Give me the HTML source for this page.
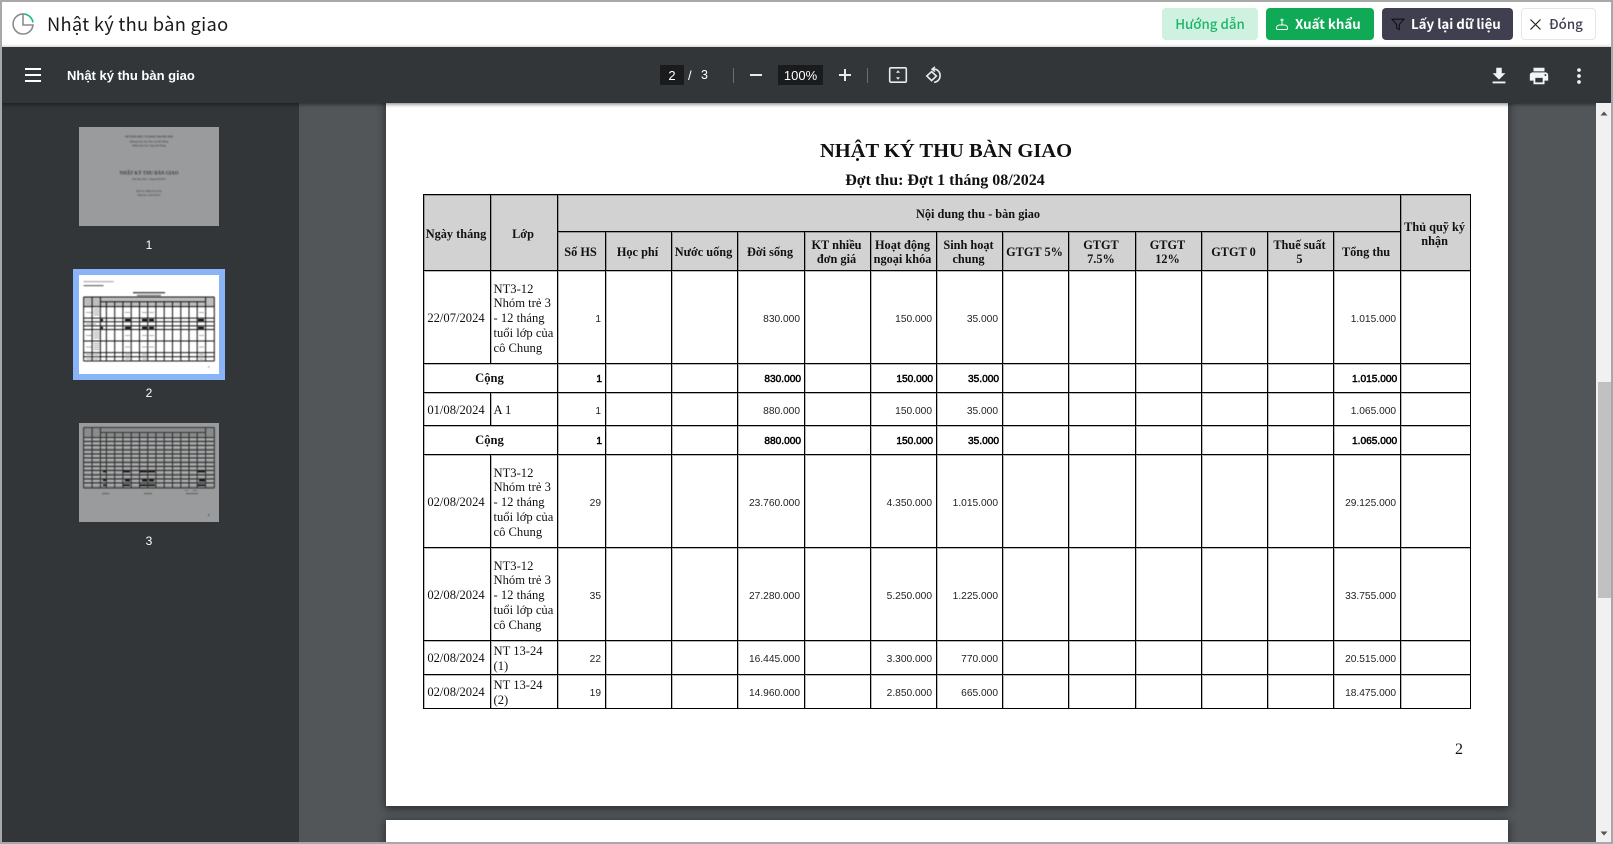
<!DOCTYPE html>
<html lang="vi">
<head>
<meta charset="utf-8">
<title>Nhật ký thu bàn giao</title>
<style>
html,body{margin:0;padding:0;width:1613px;height:844px;overflow:hidden;background:#a8a8a8}
*{box-sizing:border-box}
.a{position:absolute}
#app{position:absolute;left:2px;top:2px;width:1609px;height:840px;overflow:hidden;background:#525659}
#root{position:absolute;left:-2px;top:-2px;width:1613px;height:844px}
.hd{left:0;top:0;width:1613px;height:47px;background:#fff}
.ttl{left:47px;top:10px;font:400 18.3px/29px "Noto Sans CJK SC","DejaVu Sans",sans-serif;color:#1a1a1a;letter-spacing:.3px;white-space:nowrap}
.btn{top:8px;height:32px;border-radius:4px;font:500 13.3px/32px "Noto Sans CJK SC","DejaVu Sans",sans-serif;white-space:nowrap}
.tb{left:0;top:47px;width:1613px;height:56px;background:#323639;box-shadow:0 1px 4px rgba(0,0,0,.55);z-index:5}
.tt{font-family:"Liberation Sans",sans-serif;color:#fff;white-space:nowrap}
.sb{left:0;top:103px;width:299px;height:741px;background:#323639}
.view{left:299px;top:103px;width:1297px;height:741px;background:#525659}
.pg{background:#fff;box-shadow:0 2px 8px 1px rgba(0,0,0,.45)}
table{position:absolute;left:423px;top:194px;border-collapse:collapse;table-layout:fixed;width:1047px;font:400 12.6px/14.8px "Liberation Serif",serif;color:#111}
td,th{border:1px solid #000;padding:0;overflow:hidden;box-shadow:inset 1px 1px 0 rgba(0,0,0,.28)}
th{background:#d2d2d2;font:700 12.3px/14px "Liberation Serif",serif;color:#111;text-align:center;padding-right:2px;padding-top:2px}
td{text-align:right;vertical-align:middle}
td.n{font:400 10.2px/14px "Liberation Sans",sans-serif;padding-right:4px;padding-top:5px;color:#222}
td.b{font:400 10.15px/14px "Liberation Sans",sans-serif;padding-right:3px;padding-top:3px;color:#000;-webkit-text-stroke:.5px #000}
td.d{text-align:center;padding-right:2px;padding-top:2px}
td.l{text-align:left;padding-left:2.5px;padding-top:3px}
td.c{text-align:center;font:700 12.6px/14px "Liberation Serif",serif;padding-right:2px}
.lbl{font:400 12px/14px "Liberation Sans",sans-serif;color:#fff;width:20px;text-align:center}
</style>
</head>
<body>
<div id="app"><div id="root">

<div class="a hd">
  <svg class="a" style="left:11px;top:12px" width="24" height="24" viewBox="0 0 24 24" fill="none">
    <path d="M14.5 2.3A10 10 0 1 0 22 13H12V2.2" stroke="#8c8c8c" stroke-width="1.6"/>
    <path d="M14 2.2A10 10 0 0 1 22 10.4" stroke="#18c06c" stroke-width="1.6"/>
  </svg>
  <div class="a ttl">Nhật ký thu bàn giao</div>
  <div class="a btn" style="left:1162px;width:96px;background:#cff1df;color:#1cb56a;text-align:center">Hướng dẫn</div>
  <div class="a btn" style="left:1266px;width:108px;background:#10a955;color:#fff;padding-left:29px;font-weight:700">Xuất khẩu</div>
  <svg class="a" style="left:1275px;top:17px" width="14" height="15" viewBox="0 0 14 15" fill="none" stroke="#fff" stroke-width="1"><path d="M7 1.5v6M5.2 3h3.6M4.7 8h4.6M1.5 11c0-2 1.5-3 3.2-3h4.6c1.7 0 3.2 1 3.2 3v.5c0 .8-.5 1-1 1H2.5c-.6 0-1-.3-1-1z"/></svg>
  <div class="a btn" style="left:1382px;width:131px;background:#3f3f50;color:#fff;padding-left:29px;font-weight:700">Lấy lại dữ liệu</div>
  <svg class="a" style="left:1391px;top:18px" width="14" height="13" viewBox="0 0 14 13" fill="none" stroke="#111" stroke-width="1.1"><path d="M1 1.2h12L8.4 6.4v5.2L5.6 10V6.4z"/></svg>
  <div class="a btn" style="left:1521px;width:75px;background:#fff;border:1px solid #e6e6e6;color:#3f3f50;padding-left:27px;line-height:30px">Đóng</div>
  <svg class="a" style="left:1529px;top:18px" width="13" height="13" viewBox="0 0 13 13" fill="none" stroke="#222" stroke-width="1.2"><path d="M1.5 1.5l10 10M11.5 1.5l-10 10"/></svg>
</div>

<div class="a tb">
  <div class="a" style="left:25px;top:21px;width:16px;height:2px;background:#fff"></div>
  <div class="a" style="left:25px;top:27px;width:16px;height:2px;background:#fff"></div>
  <div class="a" style="left:25px;top:33px;width:16px;height:2px;background:#fff"></div>
  <div class="a tt" style="left:67px;top:21px;font-size:13px;line-height:16px;font-weight:700">Nhật ký thu bàn giao</div>

  <div class="a" style="left:660px;top:18px;width:24px;height:20px;background:#191b1c"></div>
  <div class="a tt" style="left:660px;top:21px;width:24px;text-align:center;font-size:13px;line-height:16px">2</div>
  <div class="a tt" style="left:688px;top:21px;font-size:13px;line-height:16px">/</div>
  <div class="a tt" style="left:701px;top:20px;font-size:12.5px;line-height:16px">3</div>
  <div class="a" style="left:733px;top:21px;width:1px;height:15px;background:#6b6e70"></div>
  <div class="a" style="left:750px;top:27px;width:12px;height:2px;background:#e8eaed"></div>
  <div class="a" style="left:778px;top:18px;width:45px;height:20px;background:#191b1c"></div>
  <div class="a tt" style="left:778px;top:21px;width:45px;text-align:center;font-size:13px;line-height:16px">100%</div>
  <div class="a" style="left:839px;top:27px;width:12px;height:2px;background:#e8eaed"></div>
  <div class="a" style="left:844px;top:22px;width:2px;height:12px;background:#e8eaed"></div>
  <div class="a" style="left:867px;top:21px;width:1px;height:15px;background:#6b6e70"></div>
  <svg class="a" style="left:888px;top:19px" width="20" height="18" viewBox="0 0 20 18" fill="none"><rect x="1.7" y="1.8" width="16.6" height="14.4" rx="1.2" stroke="#e8eaed" stroke-width="1.6"/><path d="M10 4.2l2 2.6H8zM10 13.8l2-2.6H8z" fill="#e8eaed"/></svg>
  <svg class="a" style="left:923px;top:19px" width="20" height="20" viewBox="0 0 20 20" fill="none" stroke="#e8eaed" stroke-width="1.6"><path d="M8.6 5.6L3.8 10l4.8 4.6 4.8-4.6z"/><path d="M9.5 3.2c4-.6 7.6 2 7.6 6.4 0 3.6-2.6 6.4-6 6.7"/><path d="M12 .8L9 3.2l3 2.4" stroke-width="1.4" fill="none"/></svg>

  <svg class="a" style="left:1488px;top:18px" width="22" height="22" viewBox="0 0 24 24" fill="#f1f3f4"><path d="M19 9h-4V3H9v6H5l7 7 7-7zM5 18v2h14v-2H5z"/></svg>
  <svg class="a" style="left:1528px;top:18px" width="22" height="22" viewBox="0 0 24 24" fill="#f1f3f4"><path d="M19 8H5c-1.66 0-3 1.34-3 3v6h4v4h12v-4h4v-6c0-1.66-1.34-3-3-3zm-3 11H8v-5h8v5zm3-7c-.55 0-1-.45-1-1s.45-1 1-1 1 .45 1 1-.45 1-1 1zm-1-9H6v4h12V3z"/></svg>
  <svg class="a" style="left:1568px;top:18px" width="22" height="22" viewBox="0 0 24 24" fill="#f1f3f4"><circle cx="12" cy="5.5" r="2"/><circle cx="12" cy="12" r="2"/><circle cx="12" cy="18.5" r="2"/></svg>
</div>

<div class="a sb"></div>
<div class="a view"></div>

<!-- Thumbnail 1 -->
<svg class="a" style="left:79px;top:127px" width="140" height="99" viewBox="0 0 140 99">
  <rect width="140" height="99" fill="#9a9b9c"/>
  <g font-family="Liberation Serif,serif" fill="#3a3b3c" text-anchor="middle" style="filter:blur(.4px)">
    <text x="70" y="10.5" font-size="2.8" font-weight="700">SỞ GIÁO DỤC VÀ ĐÀO TẠO HÀ NỘI</text>
    <text x="70" y="15.5" font-size="2.8">Phòng Giáo dục Đào tạo Hà Đông</text>
    <text x="70" y="19.5" font-size="2.8">Mầm Non Sao Sáng Hà Đông</text>
    <text x="70" y="47.5" font-size="4.8" font-weight="700">NHẬT KÝ THU BÀN GIAO</text>
    <text x="70" y="53" font-size="2.8">Đợt thu: Đợt 1 tháng 08/2024</text>
    <text x="70" y="65" font-size="2.8">Đơn vị: Mầm Non Sao</text>
    <text x="70" y="69" font-size="2.8">Năm học 2024-2025</text>
  </g>
</svg>

<!-- Thumbnail 2 -->
<div class="a" style="left:73px;top:269px;width:152px;height:111px;background:#8ab4f8"></div>
<svg class="a" style="left:79px;top:275px" width="140" height="99" viewBox="0 0 140 99">
  <rect width="140" height="99" fill="#fff"/>
  <g style="filter:blur(.5px)">
    <rect x="4.6" y="6" width="30" height="1.2" fill="#aaa"/>
    <rect x="4.6" y="10" width="20" height="1.2" fill="#666"/>
    <rect x="54" y="17" width="32" height="1.4" fill="#444"/>
    <rect x="58" y="19.8" width="24" height="1.2" fill="#666"/>
    <rect x="4.6" y="22" width="130.7" height="9.6" fill="#bdbdbd"/>
    <g fill="#aaa">
      <rect x="7" y="37" width="7" height="1"/><rect x="14.5" y="33.5" width="6" height="1"/><rect x="14.5" y="35.5" width="6" height="1"/><rect x="14.5" y="37.5" width="6" height="1"/><rect x="14.5" y="39.5" width="6" height="1"/><rect x="46" y="37" width="5" height="1"/><rect x="63" y="37" width="5" height="1"/><rect x="70" y="37" width="5" height="1"/><rect x="120" y="37" width="5" height="1"/>
      <rect x="7" y="48.5" width="7" height="1"/><rect x="14" y="48.5" width="3" height="1"/>
      <rect x="7" y="60" width="6" height="1"/><rect x="14.5" y="56.5" width="6" height="1"/><rect x="14.5" y="58.5" width="6" height="1"/><rect x="14.5" y="60.5" width="6" height="1"/><rect x="14.5" y="62.5" width="6" height="1"/><rect x="46" y="60" width="5" height="1"/><rect x="63" y="60" width="5" height="1"/><rect x="70" y="60" width="5" height="1"/><rect x="120" y="60" width="5" height="1"/>
      <rect x="7" y="71.5" width="6" height="1"/><rect x="14.5" y="68" width="6" height="1"/><rect x="14.5" y="70" width="6" height="1"/><rect x="14.5" y="72" width="6" height="1"/><rect x="14.5" y="74" width="6" height="1"/><rect x="46" y="71.5" width="5" height="1"/><rect x="63" y="71.5" width="5" height="1"/><rect x="70" y="71.5" width="5" height="1"/><rect x="120" y="71.5" width="5" height="1"/>
      <rect x="7" y="79" width="6" height="1"/><rect x="14" y="79" width="6" height="1"/><rect x="46" y="79" width="5" height="1"/><rect x="63" y="79" width="5" height="1"/><rect x="120" y="79" width="5" height="1"/>
      <rect x="7" y="83.5" width="6" height="1"/><rect x="14" y="83.5" width="6" height="1"/><rect x="46" y="83.5" width="5" height="1"/><rect x="63" y="83.5" width="5" height="1"/><rect x="120" y="83.5" width="5" height="1"/>
    </g>
    <g fill="#000">
      <rect x="22" y="44" width="2" height="2"/><rect x="46" y="44" width="5.5" height="2"/><rect x="63" y="44" width="5" height="2"/><rect x="70" y="44" width="5" height="2"/><rect x="119" y="44" width="6" height="2"/>
      <rect x="22" y="51.8" width="2" height="2"/><rect x="46" y="51.8" width="5.5" height="2"/><rect x="63" y="51.8" width="5" height="2"/><rect x="70" y="51.8" width="5" height="2"/><rect x="119" y="51.8" width="6" height="2"/>
    </g>
    <path stroke="#111" stroke-width="1" fill="none" d="M4.6 22V86M13.1 22V86M21.4 22V86M27.4 27V86M35.7 27V86M43.9 27V86M52.2 27V86M60.5 27V86M68.7 27V86M76.9 27V86M85.2 27V86M93.5 27V86M101.8 27V86M110 27V86M118.2 27V86M126.6 22V86M135.3 22V86"/>
    <path stroke="#111" stroke-width="1" fill="none" d="M4.6 22H135.3M21.4 26.8H126.6M4.6 31.6H135.3M4.6 43.1H135.3M4.6 46.7H135.3M4.6 50.9H135.3M4.6 54.5H135.3M4.6 66H135.3M4.6 77.6H135.3M4.6 81.8H135.3M4.6 86H135.3"/>
    <rect x="129" y="91" width="1.5" height="2" fill="#bbb"/>
  </g>
</svg>

<!-- Thumbnail 3 -->
<svg class="a" style="left:79px;top:423px" width="140" height="99" viewBox="0 0 140 99">
  <rect width="140" height="99" fill="#9a9b9c"/>
  <g style="filter:blur(.5px)">
    <rect x="4.6" y="4.5" width="130.7" height="60.5" fill="#8a8b8c"/>
    <g fill="#b3b4b5">
      <rect x="5" y="15.5" width="130" height="1.6"/><rect x="5" y="19.5" width="130" height="1.6"/><rect x="5" y="23.5" width="130" height="1.6"/><rect x="5" y="28" width="130" height="1.6"/><rect x="5" y="32" width="130" height="1.6"/><rect x="5" y="36" width="130" height="1.6"/><rect x="5" y="40.5" width="130" height="1.6"/><rect x="5" y="44.5" width="130" height="1.6"/><rect x="5" y="48.5" width="130" height="1.6"/><rect x="5" y="53" width="130" height="1.6"/><rect x="5" y="57" width="130" height="1.6"/><rect x="5" y="61" width="130" height="1.6"/>
    </g>
    <path stroke="#2a2a2b" stroke-width="1" fill="none" d="M4.6 4.5V65M13.1 4.5V65M21.4 4.5V65M27.4 9.5V65M35.7 9.5V65M43.9 9.5V65M52.2 9.5V65M60.5 9.5V65M68.7 9.5V65M76.9 9.5V65M85.2 9.5V65M93.5 9.5V65M101.8 9.5V65M110 9.5V65M118.2 9.5V65M126.6 4.5V65M135.3 4.5V65"/>
    <path stroke="#333" stroke-width=".9" fill="none" d="M4.6 4.5H135.3M21.4 9.5H126.6M4.6 14.5H135.3M4.6 18.5H135.3M4.6 22.5H135.3M4.6 27H135.3M4.6 31H135.3M4.6 35H135.3M4.6 39.5H135.3M4.6 43.5H135.3M4.6 47.5H135.3M4.6 52H135.3M4.6 56H135.3M4.6 60H135.3M4.6 65H135.3"/>
    <g fill="#111">
      <rect x="24" y="47.8" width="3" height="1.6"/><rect x="44" y="47.8" width="7" height="1.6"/><rect x="61" y="47.8" width="7" height="1.6"/><rect x="69" y="47.8" width="7" height="1.6"/><rect x="118.5" y="47.8" width="7.5" height="1.6"/>
      <rect x="24" y="56.4" width="3" height="1.6"/><rect x="46" y="56.4" width="5" height="2"/><rect x="63" y="56.4" width="5" height="2"/><rect x="70" y="56.4" width="5" height="2"/><rect x="120" y="56.4" width="6" height="2"/>
      <rect x="24" y="61.4" width="3" height="1.6"/><rect x="44" y="61.4" width="7" height="1.6"/><rect x="61" y="61.4" width="7" height="1.6"/><rect x="69" y="61.4" width="7" height="1.6"/><rect x="118.5" y="61.4" width="7.5" height="1.6"/>
    </g>
    <g fill="#666">
      <rect x="23" y="70" width="7" height="1.2"/><rect x="65" y="70" width="8" height="1.2"/><rect x="107" y="70" width="12" height="1.2"/><rect x="106" y="67" width="3" height=".9"/><rect x="114" y="67" width="4" height=".9"/>
      <rect x="129" y="91" width="1.5" height="2"/>
    </g>
  </g>
</svg>

<div class="a lbl" style="left:139px;top:238px">1</div>
<div class="a lbl" style="left:139px;top:386px">2</div>
<div class="a lbl" style="left:139px;top:534px">3</div>

<!-- Document page -->
<div class="a pg" style="left:386px;top:80px;width:1122px;height:726px"></div>
<div class="a pg" style="left:386px;top:820px;width:1122px;height:40px"></div>

<div class="a" style="left:422px;top:138px;width:1048px;text-align:center;font:700 20.5px/26px 'Liberation Serif',serif;color:#111">NHẬT KÝ THU BÀN GIAO</div>
<div class="a" style="left:421px;top:171px;width:1048px;text-align:center;font:700 16px/20px 'Liberation Serif',serif;color:#111">Đợt thu: Đợt 1 tháng 08/2024</div>

<table>
<colgroup>
<col style="width:67px"><col style="width:67px"><col style="width:48px"><col style="width:66px"><col style="width:66px"><col style="width:67px"><col style="width:66px"><col style="width:66px"><col style="width:66px"><col style="width:66px"><col style="width:67px"><col style="width:66px"><col style="width:66px"><col style="width:66px"><col style="width:67px"><col style="width:70px">
</colgroup>
<tr style="height:37px"><th rowspan="2">Ngày tháng</th><th rowspan="2">Lớp</th><th colspan="13">Nội dung thu - bàn giao</th><th rowspan="2">Thủ quỹ ký nhận</th></tr>
<tr style="height:39px"><th>Số HS</th><th>Học phí</th><th>Nước uống</th><th>Đời sống</th><th>KT nhiều đơn giá</th><th>Hoạt động ngoại khóa</th><th>Sinh hoạt chung</th><th>GTGT 5%</th><th>GTGT<br>7.5%</th><th>GTGT<br>12%</th><th>GTGT 0</th><th>Thuế suất<br>5</th><th>Tổng thu</th></tr>
<tr style="height:93px"><td class="d">22/07/2024</td><td class="l">NT3-12 Nhóm trẻ 3 - 12 tháng tuổi lớp của cô Chung</td><td class="n">1</td><td></td><td></td><td class="n">830.000</td><td></td><td class="n">150.000</td><td class="n">35.000</td><td></td><td></td><td></td><td></td><td></td><td class="n">1.015.000</td><td></td></tr>
<tr style="height:29px"><td class="c" colspan="2">Cộng</td><td class="b">1</td><td></td><td></td><td class="b">830.000</td><td></td><td class="b">150.000</td><td class="b">35.000</td><td></td><td></td><td></td><td></td><td></td><td class="b">1.015.000</td><td></td></tr>
<tr style="height:33px"><td class="d">01/08/2024</td><td class="l">A 1</td><td class="n">1</td><td></td><td></td><td class="n">880.000</td><td></td><td class="n">150.000</td><td class="n">35.000</td><td></td><td></td><td></td><td></td><td></td><td class="n">1.065.000</td><td></td></tr>
<tr style="height:29px"><td class="c" colspan="2">Cộng</td><td class="b">1</td><td></td><td></td><td class="b">880.000</td><td></td><td class="b">150.000</td><td class="b">35.000</td><td></td><td></td><td></td><td></td><td></td><td class="b">1.065.000</td><td></td></tr>
<tr style="height:93px"><td class="d">02/08/2024</td><td class="l">NT3-12 Nhóm trẻ 3 - 12 tháng tuổi lớp của cô Chung</td><td class="n">29</td><td></td><td></td><td class="n">23.760.000</td><td></td><td class="n">4.350.000</td><td class="n">1.015.000</td><td></td><td></td><td></td><td></td><td></td><td class="n">29.125.000</td><td></td></tr>
<tr style="height:93px"><td class="d">02/08/2024</td><td class="l">NT3-12 Nhóm trẻ 3 - 12 tháng tuổi lớp của cô Chang</td><td class="n">35</td><td></td><td></td><td class="n">27.280.000</td><td></td><td class="n">5.250.000</td><td class="n">1.225.000</td><td></td><td></td><td></td><td></td><td></td><td class="n">33.755.000</td><td></td></tr>
<tr style="height:34px"><td class="d">02/08/2024</td><td class="l">NT 13-24 (1)</td><td class="n">22</td><td></td><td></td><td class="n">16.445.000</td><td></td><td class="n">3.300.000</td><td class="n">770.000</td><td></td><td></td><td></td><td></td><td></td><td class="n">20.515.000</td><td></td></tr>
<tr style="height:34px"><td class="d">02/08/2024</td><td class="l">NT 13-24 (2)</td><td class="n">19</td><td></td><td></td><td class="n">14.960.000</td><td></td><td class="n">2.850.000</td><td class="n">665.000</td><td></td><td></td><td></td><td></td><td></td><td class="n">18.475.000</td><td></td></tr>
</table>

<div class="a" style="left:1452px;top:741px;width:14px;text-align:center;font:400 16px/18px 'Liberation Serif',serif;color:#111">2</div>

<!-- Scrollbar -->
<div class="a" style="left:1596px;top:103px;width:15px;height:741px;background:#f1f1f1;z-index:6"></div>
<div class="a" style="left:1598px;top:382px;width:13px;height:216px;background:#c1c1c1;z-index:6"></div>
<svg class="a" style="left:1598px;top:109px;z-index:6" width="12" height="8" viewBox="0 0 12 8"><path d="M2.5 6.5h7L6 2.5z" fill="#555"/></svg>
<svg class="a" style="left:1598px;top:830px;z-index:6" width="12" height="8" viewBox="0 0 12 8"><path d="M2.5 1.5h7L6 5.5z" fill="#555"/></svg>

</div></div>
</body>
</html>
